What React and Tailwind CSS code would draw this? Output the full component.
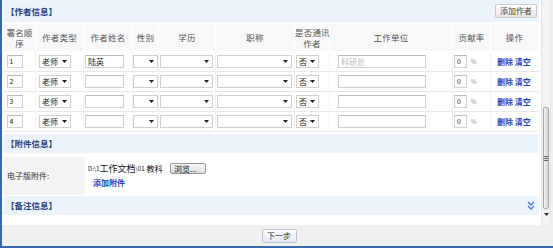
const rows = [
  { n: '1', name: '陆英', unit: '科研处' },
  { n: '2', name: '', unit: '' },
  { n: '3', name: '', unit: '' },
  { n: '4', name: '', unit: '' },
]

function Arrow() {
  return (
    <svg width="5" height="3" viewBox="0 0 5 3" className="shrink-0">
      <path d="M0 0 L5 0 L2.5 3 Z" fill="#222" />
    </svg>
  )
}

function Select({ w, text }) {
  return (
    <div
      className={`h-[13px] ${w} flex items-center justify-between border border-[#cfcfcf] bg-white pl-[2px] pr-[3px] text-[8px] leading-none text-[#222]`}
    >
      <span>{text}</span>
      <Arrow />
    </div>
  )
}

function Box({ w, children, muted }) {
  return (
    <div
      className={`h-[13px] ${w} flex items-center border border-[#cfcfcf] border-t-[#b9b9b9] bg-white px-[2px] text-[8px] leading-none ${muted ? 'text-[#bbbbbb]' : 'text-[#222]'}`}
    >
      {children}
    </div>
  )
}

function Section({ title, children }) {
  return (
    <div className="flex h-[19px] items-center justify-between bg-[#edf3fb] pl-[3px] pr-[3px]">
      <span className="text-[8.5px] font-bold text-[#1f3f85]">{title}</span>
      {children}
    </div>
  )
}

const heads = [
  ['署名顺', '序'],
  ['作者类型'],
  ['作者姓名'],
  ['性别'],
  ['学历'],
  ['职称'],
  ['是否通讯', '作者'],
  ['工作单位'],
  ['贡献率'],
  ['操作'],
]
const widths = [32, 48, 49, 26, 57, 79, 35, 123, 38, 48]

export default function App() {
  return (
    <div
      className="flex h-[248px] w-[553px] flex-col overflow-hidden border-b-2 border-l-2 border-[#3a67a8] bg-white"
      style={{ fontFamily: '"Noto Sans CJK SC", "Noto Sans", sans-serif' }}
    >
      <div className="flex h-[225px]">
        <div className="w-[538px] pl-px">
          <div className="flex h-[22px] items-center justify-between bg-[#edf3fb] pl-[3px] pr-[2px]">
            <span className="text-[8.5px] font-bold text-[#1f3f85]">【作者信息】</span>
            <button className="h-[14px] rounded-[2px] border border-[#c9c9c9] bg-gradient-to-b from-white to-[#e6e6e6] px-[4px] text-[8px] leading-none text-[#444]">
              添加作者
            </button>
          </div>
          <table className="mt-px table-fixed border-collapse" style={{ width: 535 }}>
            <colgroup>
              {widths.map((w, i) => (
                <col key={i} style={{ width: w }} />
              ))}
            </colgroup>
            <thead>
              <tr className="h-[28px] bg-[#f8f8f8]">
                {heads.map((h, i) => (
                  <th key={i} className="whitespace-nowrap border border-white p-0 text-center text-[8.5px] font-normal leading-[11px] tracking-[0.2px] text-[#555]">
                    {h.map((l, j) => (
                      <div key={j}>{l}</div>
                    ))}
                  </th>
                ))}
              </tr>
            </thead>
            <tbody>
              {rows.map((r) => (
                <tr key={r.n} className="h-[20px] border-b border-[#e8e8e8]">
                  <td className="border-r border-[#f2f2f2] p-0 pl-[3px]">
                    <Box w="w-[16px]"><span className="text-[7px]">{r.n}</span></Box>
                  </td>
                  <td className="border-r border-[#f2f2f2] p-0 pl-[3px]">
                    <Select w="w-[32px]" text="老师" />
                  </td>
                  <td className="border-r border-[#f2f2f2] p-0 pl-[1px]">
                    <Box w="w-[39px]">{r.name}</Box>
                  </td>
                  <td className="border-r border-[#f2f2f2] p-0">
                    <Select w="w-[25px]" text="" />
                  </td>
                  <td className="border-r border-[#f2f2f2] p-0 pl-[1px]">
                    <Select w="w-[53px]" text="" />
                  </td>
                  <td className="border-r border-[#f2f2f2] p-0 pl-[1px]">
                    <Select w="w-[75px]" text="" />
                  </td>
                  <td className="border-r border-[#f2f2f2] p-0 pl-[1px]">
                    <Select w="w-[23px]" text="否" />
                  </td>
                  <td className="border-r border-[#f2f2f2] p-0 pl-[8px]">
                    <Box w="w-[88px]" muted>{r.unit}</Box>
                  </td>
                  <td className="border-r border-[#f2f2f2] p-0 pl-[1px]">
                    <div className="flex items-center gap-[4px]">
                      <Box w="w-[13px]"><span className="text-[7px]">0</span></Box>
                      <span className="text-[6px] text-[#888]">%</span>
                    </div>
                  </td>
                  <td className="p-0 pl-[6px] text-[8px] font-bold text-[#2b3fbf]">
                    删除 清空
                  </td>
                </tr>
              ))}
            </tbody>
          </table>

          <div className="mt-[2px]">
            <Section title="【附件信息】" />
          </div>
          <div className="mt-[4px] flex h-[38px]">
            <div className="flex w-[82px] items-center bg-[#f4f4f4] pl-[4px] text-[8px] text-[#333]">
              电子版附件:
            </div>
            <div className="flex flex-1 flex-col justify-center pl-[3px]">
              <div className="flex items-center gap-[4px]">
                <div className="flex h-[11px] w-[78px] items-center overflow-hidden whitespace-nowrap bg-white text-[8px] leading-none text-[#111]">
                  <span className="text-[6px]">D:\1</span>
                  <span className="text-[9px]">工作文档</span>
                  <span className="text-[6px]">\01</span>
                  <span className="ml-[2px] text-[8px]">教科</span>
                </div>
                <button className="h-[11px] w-[36px] rounded-[2px] border border-[#999] bg-gradient-to-b from-[#f8f8f8] to-[#dedede] pl-[3px] text-left text-[8px] leading-none text-[#111]">
                  浏览...
                </button>
              </div>
              <div className="mt-[3px] pl-[5px] text-[8px] font-bold text-[#2b3fbf]">添加附件</div>
            </div>
          </div>
          <div className="mt-px">
            <Section title="【备注信息】">
              <svg width="8" height="9" viewBox="0 0 8 9" className="mr-[1px]">
                <path d="M1 1 L4 4 L7 1 M1 5 L4 8 L7 5" stroke="#4a7bd0" strokeWidth="1.3" fill="none" />
              </svg>
            </Section>
          </div>
        </div>

        <div className="ml-[2px] flex w-[11px] flex-col border-x border-[#e3e3e3] bg-[#f3f3f3]">
          <div className="h-[107px]" />
          <div className="mx-px flex h-[102px] items-center justify-center rounded-[2px] border border-[#a4a4a4] bg-gradient-to-r from-[#f2f2f2] to-[#d6d6d6]">
            <div className="flex flex-col gap-px">
              <div className="h-px w-[4px] bg-[#666]" />
              <div className="h-px w-[4px] bg-[#666]" />
              <div className="h-px w-[4px] bg-[#666]" />
            </div>
          </div>
          <div className="mt-[4px] flex justify-center">
            <svg width="5" height="3" viewBox="0 0 5 3">
              <path d="M0 0 L5 0 L2.5 3 Z" fill="#333" />
            </svg>
          </div>
        </div>
        <div className="w-[2px] bg-[#f0f0f0]" />
      </div>

      <div className="flex flex-1 items-center justify-center bg-[#f0f0f0]">
        <button className="ml-[3px] h-[14px] w-[35px] rounded-[2px] border border-[#b7c3d3] bg-gradient-to-b from-[#fbfcfe] to-[#e3e9f1] text-[8px] leading-none text-[#333]">
          下一步
        </button>
      </div>
    </div>
  )
}
